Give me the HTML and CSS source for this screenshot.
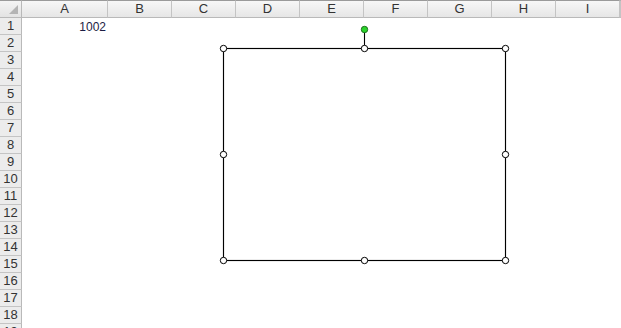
FILE: index.html
```html
<!doctype html>
<html>
<head>
<meta charset="utf-8">
<link rel="stylesheet" href="styles.css">
<script>
window.onload = function(){
	var oSheet = document.querySelector('.sheet');
	var cols = ['A','B','C','D','E','F','G','H','I',''];
	var html = '<div class="corner"><span></span></div>';
	for(var i=0;i<cols.length;i++){
		html += '<div class="col_head">'+cols[i]+'</div>';
	}
	for(var r=1;r<=19;r++){
		html += '<div class="row_head">'+r+'</div>';
		for(var c=0;c<cols.length;c++){
			var txt = (r==1 && c==0) ? '1002' : '';
			html += '<div class="cell">'+txt+'</div>';
		}
	}
	oSheet.innerHTML = html;
};
</script>
</head>

<body>
<div class="sheet"></div>
<svg class="shape" width="621" height="328" viewBox="0 0 621 328">
	<line x1="364.5" y1="30" x2="364.5" y2="48" stroke="#000" stroke-width="1.1"/>
	<rect x="223.5" y="48.5" width="282" height="212" fill="none" stroke="#000" stroke-width="1.15"/>
	<circle cx="364.5" cy="29.5" r="3.2" fill="#2bd42b" stroke="#1e6e1e" stroke-width="1"/>
	<circle cx="223.5" cy="48.5" r="3.2" fill="#fff" stroke="#000" stroke-width="1"/>
	<circle cx="364.5" cy="48.5" r="3.2" fill="#fff" stroke="#000" stroke-width="1"/>
	<circle cx="505.5" cy="48.5" r="3.2" fill="#fff" stroke="#000" stroke-width="1"/>
	<circle cx="223.5" cy="154.5" r="3.2" fill="#fff" stroke="#000" stroke-width="1"/>
	<circle cx="505.5" cy="154.5" r="3.2" fill="#fff" stroke="#000" stroke-width="1"/>
	<circle cx="223.5" cy="260.5" r="3.2" fill="#fff" stroke="#000" stroke-width="1"/>
	<circle cx="364.5" cy="260.5" r="3.2" fill="#fff" stroke="#000" stroke-width="1"/>
	<circle cx="505.5" cy="260.5" r="3.2" fill="#fff" stroke="#000" stroke-width="1"/>
</svg>
</body>
</html>
```

FILE: styles.css
```css
*{margin:0; padding:0; box-sizing:border-box;}
body{width:621px; height:328px; overflow:hidden; background:#fff; font-family:"Liberation Sans", Arial, sans-serif; position:relative;}
.sheet{display:grid; grid-template-columns:22px 86px repeat(7, 64px) 64px 1px; grid-template-rows:18px; grid-auto-rows:17px; height:328px; overflow:hidden;}
.corner{background:linear-gradient(#f4f4f4, #e3e3e3); border-right:1px solid #b9b9b9; border-bottom:1px solid #b9b9b9; border-top:1px solid #9a9a9a; position:relative;}
.corner span{position:absolute; right:3px; bottom:3px; width:0; height:0; border-left:9px solid transparent; border-bottom:9px solid #b4b4b4;}
.col_head{background:linear-gradient(#f7f7f7, #e6e6e6); border-top:1px solid #9a9a9a; border-right:1px solid #c4c4c4; border-bottom:1px solid #b9b9b9; font-size:13px; color:#333; text-align:center; line-height:16px; overflow:hidden;}
.row_head{background:#ececec; border-right:1px solid #b9b9b9; border-bottom:1px solid #c4c4c4; font-size:13px; color:#333; text-align:center; line-height:16px;}
.cell{font-size:12px; color:#1c1c44; text-align:right; line-height:18px; padding-right:2px; overflow:hidden;}
.shape{position:absolute; top:0; left:0;}
```
